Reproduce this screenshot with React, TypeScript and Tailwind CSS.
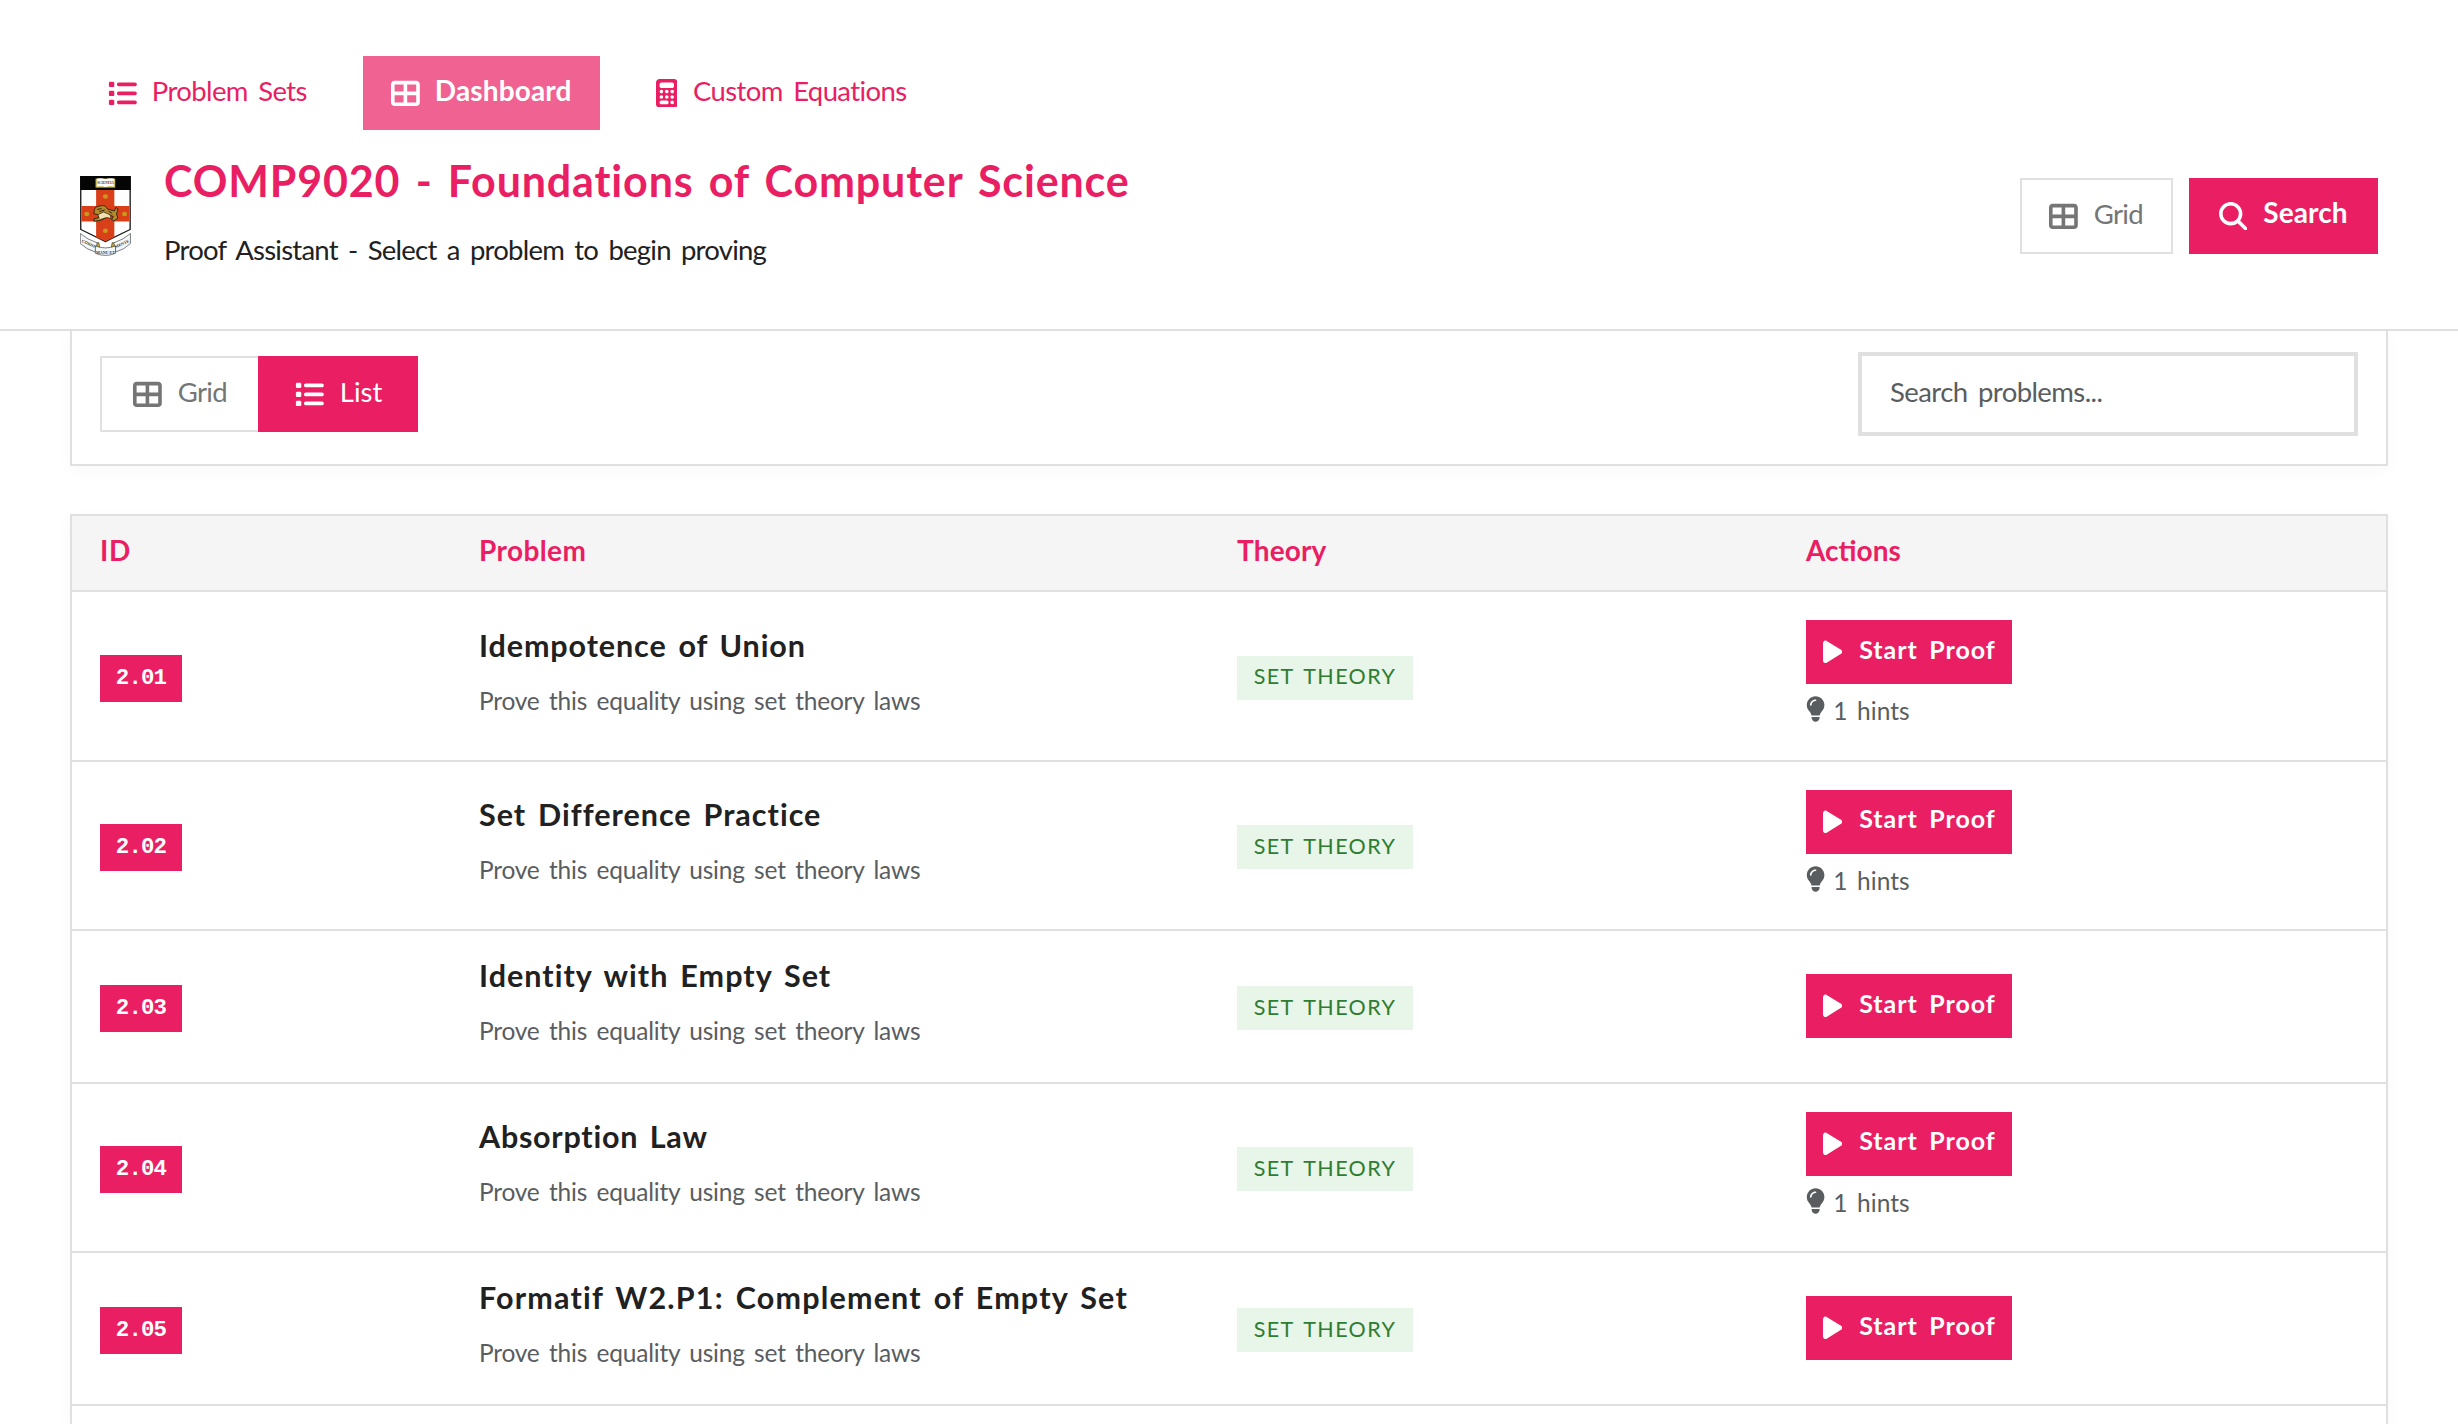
import type { ReactNode } from "react";
import { FaCalculator, FaLightbulb, FaList, FaMagnifyingGlass, FaPlay, FaTableCellsLarge } from "react-icons/fa6";

type Problem = { id: string; title: string; tracking: string; height: string; hints?: number };

const problems: Problem[] = [
  { id: "2.01", title: "Idempotence of Union", tracking: "tracking-[0.9px]", height: "h-[170px]", hints: 1 },
  { id: "2.02", title: "Set Difference Practice", tracking: "tracking-[1px]", height: "h-[169px]", hints: 1 },
  { id: "2.03", title: "Identity with Empty Set", tracking: "tracking-[1.03px]", height: "h-[153px]" },
  { id: "2.04", title: "Absorption Law", tracking: "tracking-[0.74px]", height: "h-[169px]", hints: 1 },
  { id: "2.05", title: "Formatif W2.P1: Complement of Empty Set", tracking: "tracking-[1.17px]", height: "h-[153px]" },
];

const columns = "grid grid-cols-[379px_758px_569px_1fr]";

function Label({ className, children }: { className: string; children: ReactNode }) {
  return <span className={`whitespace-nowrap leading-none ${className}`}>{children}</span>;
}

function Crest() {
  return (
    <svg viewBox="0 0 47.5 80" preserveAspectRatio="none" className="mt-[26px] h-20 w-[51px] shrink-0">
      <path d="M.7.5H46.7V53.5L23.7 65.5.7 53.5Z" fill="#fff" stroke="#111" strokeWidth="1.2" />
      <path d="M15 14H32V61.2L23.7 65.2 15 61.2Z" fill="#d9401a" />
      <path d="M1.3 30H46.1V45.6H1.3Z" fill="#d9401a" />
      <path d="M.2 0H47.2V14H.2Z" fill="#050505" />
      <path d="M14.5 2.6H32.8V11.6H14.5Z" fill="#cdbf63" />
      <path d="M16 2.6Q20 1.6 23.7 3.2 27.5 1.6 31.4 2.6V10.4Q27.5 9.4 23.7 11 20 9.4 16 10.4Z" fill="#fff" />
      <text x="23.7" y="8" textAnchor="middle" fontSize="3.2" fontWeight="700" fill="#333" fontFamily="Liberation Serif">SCIENTIA</text>
      <g fill="#c79a1c">
        <circle cx="23.7" cy="20.5" r="2.3" />
        <circle cx="6.3" cy="38" r="2.3" />
        <circle cx="41.5" cy="38" r="2.3" />
        <circle cx="23.7" cy="54.7" r="2.3" />
      </g>
      <path d="M13.5 33.5Q14 30.5 17 30.4L20 29.6Q24 29 25.5 33L32 35 33.5 31.5 35.5 33 34 38 35.4 42 31.5 45 29.5 43.5 31 40.5 26.5 38.5 24 42 18.5 44.5 13 45.2 12.8 43 17.5 41.5 17 38.8 12.8 37.6Z" fill="#b28a2b" stroke="#2d210d" strokeWidth=".9" />
      <path d="M17 38.5 22 36 28 38.8 29 42.5 24.8 41.5 19 43.5" fill="#f1e2b4" stroke="#2d210d" strokeWidth=".7" />
      <path d="M16 33.5 20 32.5M18 35.5 23 34M26.5 35 30 37.5" fill="none" stroke="#2d210d" strokeWidth=".9" />
      <g stroke="#333" strokeWidth=".6">
        <path d="M14 67.5 17.5 66.5 18.5 72 14.5 74Z" fill="#c8ab28" />
        <path d="M33.4 67.5 30 66.5 29 72 33 74Z" fill="#c8ab28" />
        <path d="M.3 57.5Q7 63.8 16 66.8L14.2 76Q6 73.5.3 67.5Z" fill="#f2f7fa" />
        <path d="M47 57.5Q40.5 63.8 31.5 66.8L33.3 76Q41.5 73.5 47 67.5Z" fill="#f2f7fa" />
        <path d="M14.3 70Q23.7 73.8 33.1 70V77.3Q23.7 81.6 14.3 77.3Z" fill="#f2f7fa" />
      </g>
      <g fontSize="4" fontWeight="700" fill="#333" fontFamily="Liberation Serif" textAnchor="middle">
        <text transform="translate(7.7 69) rotate(26)">CORDE</text>
        <text x="23.7" y="77.6" fontSize="3.8">MANU ET</text>
        <text transform="translate(39.7 69) rotate(-26)">MENTE</text>
      </g>
    </svg>
  );
}

function Header() {
  return (
    <header className="relative z-10 h-[331px] shrink-0 border-b-2 border-[#e0e0e0] bg-white px-20 pt-14">
      <nav className="flex h-[74px] gap-[27px] text-[27.5px] text-[#e91e63]">
        <a className="flex w-64 items-center gap-[15px] pl-[28px]">
          <FaList className="size-[28.8px] shrink-0" />
          <Label className="pb-1 tracking-[-0.62px] [word-spacing:4px]">Problem Sets</Label>
        </a>
        <a className="flex w-[237px] items-center gap-[15px] bg-[#f06292] pl-[28px] text-[28px] font-bold text-white">
          <FaTableCellsLarge className="size-[28.8px] shrink-0" />
          <Label className="pb-1.5 tracking-[0.15px]">Dashboard</Label>
        </a>
        <a className="flex items-center gap-4 pl-[28.5px]">
          <FaCalculator className="h-[28.8px] w-[21.6px] shrink-0" />
          <Label className="pb-1 tracking-[-0.62px] [word-spacing:4px]">Custom Equations</Label>
        </a>
      </nav>
      <div className="flex items-start justify-between pt-5">
        <div className="flex items-start gap-[33px]">
          <Crest />
          <div>
            <h1 className="text-[43px] leading-[62px] font-bold tracking-[0.85px] whitespace-nowrap text-[#e91e63] [word-spacing:4px]">
              COMP9020 - Foundations of Computer Science
            </h1>
            <p className="mt-4 text-[27.5px] leading-[44px] tracking-[-0.77px] whitespace-nowrap text-[#212121] [word-spacing:4px]">
              Proof Assistant - Select a problem to begin proving
            </p>
          </div>
        </div>
        <div className="mt-7 flex h-[76px] gap-4">
          <button className="flex w-[153px] items-center gap-4 border-2 border-[#e0e0e0] pl-[27px] text-[27.5px] text-[#757575]">
            <FaTableCellsLarge className="size-[28.8px] shrink-0" />
            <Label className="pb-1 tracking-[-0.7px]">Grid</Label>
          </button>
          <button className="flex w-[189px] items-center gap-4 bg-[#e91e63] pl-[29.5px] text-[28px] font-bold text-white">
            <FaMagnifyingGlass className="size-[28.8px] shrink-0" />
            <Label className="pb-2 tracking-[0.1px]">Search</Label>
          </button>
        </div>
      </div>
    </header>
  );
}

function Toolbar() {
  return (
    <section className="h-[135px] shrink-0 border-2 border-t-0 border-[#e0e0e0] bg-white px-7 pt-[21px] shadow-[0_4px_16px_rgba(0,0,0,0.03)]">
      <div className="flex h-[84px] items-center justify-between text-[27.5px]">
        <div className="flex h-[76px]">
          <button className="flex w-[158px] items-center gap-4 border-2 border-r-0 border-[#e0e0e0] pl-[31px] text-[#757575]">
            <FaTableCellsLarge className="size-[28.8px] shrink-0" />
            <Label className="pb-1 tracking-[-0.7px]">Grid</Label>
          </button>
          <button className="flex w-40 items-center gap-4 bg-[#e91e63] pl-[37px] text-white">
            <FaList className="size-[28.8px] shrink-0" />
            <Label className="pb-1">List</Label>
          </button>
        </div>
        <div className="flex h-[84px] w-[500px] items-center border-4 border-[#e0e0e0] pl-[28px] text-[#5a5d60]">
          <Label className="pb-1 tracking-[-0.58px] [word-spacing:4px]">Search problems...</Label>
        </div>
      </div>
    </section>
  );
}

function ProblemRow({ problem }: { problem: Problem }) {
  return (
    <div className={`${columns} ${problem.height} items-center border-b-2 border-[#e0e0e0] bg-white`}>
      <div className="px-7 pt-[4.5px]">
        <div className="flex h-[47px] w-[82px] items-center justify-center bg-[#e91e63] pb-px font-['Liberation_Mono',monospace] text-[22.4px] leading-none font-bold tracking-[-0.84px] text-white">
          {problem.id}
        </div>
      </div>
      <div className="px-7 pb-[11px] whitespace-nowrap">
        <h3 className={`text-[30.5px] leading-10 font-bold text-[#212121] [word-spacing:3.5px] ${problem.tracking}`}>{problem.title}</h3>
        <p className="mt-5 text-[24.5px] leading-8 tracking-[-0.22px] text-[#5a5d60] [word-spacing:3.4px]">
          Prove this equality using set theory laws
        </p>
      </div>
      <div className="px-7 pt-[3.5px]">
        <div className="flex h-11 w-44 items-center justify-center bg-[#e8f5e9] text-[21.5px] text-[#2e7d32]">
          <Label className="pb-0.5 tracking-[1.38px] [word-spacing:3px]">SET THEORY</Label>
        </div>
      </div>
      <div className={problem.hints ? "px-7" : "px-7 pb-px"}>
        <button className="flex h-16 w-[206px] items-center gap-[17px] bg-[#e91e63] pl-[17px] text-[25px] font-bold text-white">
          <FaPlay className="h-[25.6px] w-[19.2px] shrink-0" />
          <Label className="pb-1.5 tracking-[0.95px] [word-spacing:4.5px]">Start Proof</Label>
        </button>
        {problem.hints && (
          <div className="flex items-start gap-2 pt-3 pb-[9.5px] text-[24.5px] text-[#5a5d60]">
            <FaLightbulb className="h-[26px] w-[19.2px] shrink-0" />
            <Label className="-mb-px pt-[3px] [word-spacing:3.4px]">{problem.hints} hints</Label>
          </div>
        )}
      </div>
    </div>
  );
}

function ProblemTable() {
  return (
    <section className="mt-12 flex-1 border-2 border-b-0 border-[#e0e0e0] shadow-[0_4px_16px_rgba(0,0,0,0.03)]">
      <div className={`${columns} h-[76px] items-center border-b-2 border-[#e0e0e0] bg-[#f5f5f5] pb-[7px] text-[28px] leading-none font-bold text-[#e91e63]`}>
        <span className="px-7 tracking-[0.8px]">ID</span>
        <span className="px-7 tracking-[0.4px]">Problem</span>
        <span className="px-7 tracking-[0.15px]">Theory</span>
        <span className="px-7">Actions</span>
      </div>
      {problems.map((problem) => (
        <ProblemRow key={problem.id} problem={problem} />
      ))}
    </section>
  );
}

export default function App() {
  return (
    <div className="flex h-[1424px] w-[2458px] flex-col overflow-hidden bg-white font-['Lato','Open_Sans',sans-serif]">
      <Header />
      <main className="flex flex-1 flex-col px-[70px]">
        <Toolbar />
        <ProblemTable />
      </main>
    </div>
  );
}
